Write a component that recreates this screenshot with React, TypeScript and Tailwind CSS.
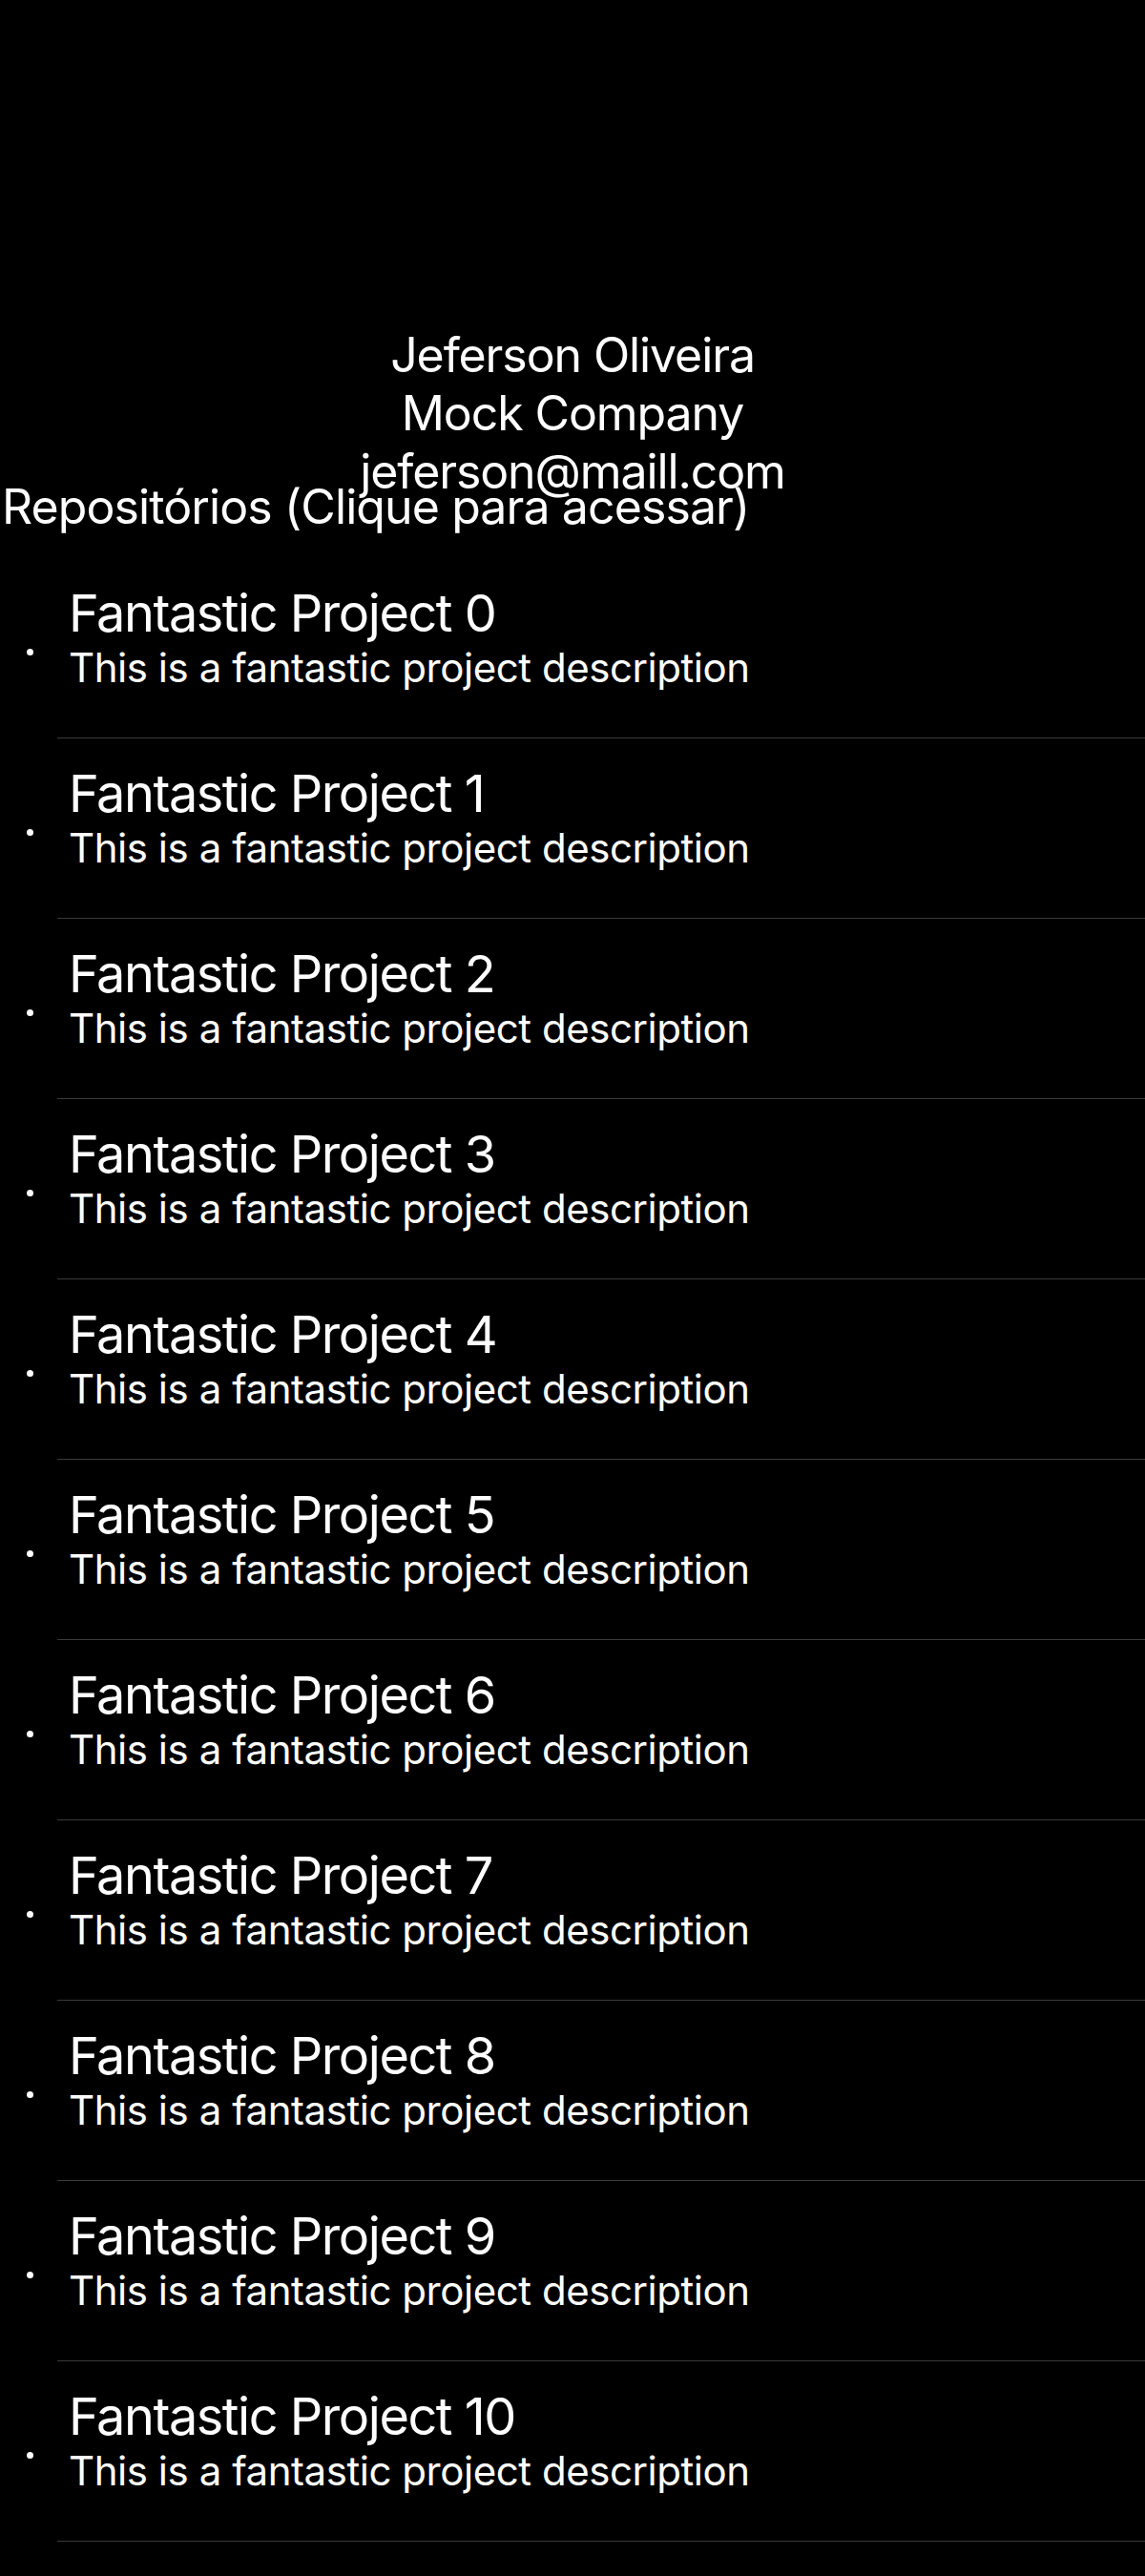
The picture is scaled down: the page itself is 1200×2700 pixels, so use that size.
import React from "react";

type Repo = {
  name: string;
  description: string;
};

const repos: Repo[] = Array.from({ length: 11 }, (_, i) => ({
  name: `Fantastic Project ${i}`,
  description: "This is a fantastic project description",
}));

const RepoRow: React.FC<{ repo: Repo }> = ({ repo }) => {
  return (
    <li className="flex h-[189px]">
      <div className="w-[60px] shrink-0 flex items-start pt-[95px] pl-[28px]">
        <span className="block w-[7px] h-[7px] rounded-full bg-white" />
      </div>
      <div className="flex-1 border-b border-[#3a3a3c] pl-[12px] pt-[26px]">
        <div className="text-[54px] leading-[64px] tracking-[-1.45px]">
          {repo.name}
        </div>
        <div className="text-[42px] leading-[50px] tracking-[-0.45px]">
          {repo.description}
        </div>
      </div>
    </li>
  );
};

export default function App() {
  return (
    <div
      className="h-[2700px] overflow-hidden bg-black text-white"
      style={{ fontFamily: "Inter, 'Noto Sans', sans-serif" }}
    >
      <header className="pt-[342px] h-[501px] text-center text-[50px] leading-[61px] tracking-[-1.1px]">
        <div>Jeferson Oliveira</div>
        <div>Mock Company</div>
        <div>jeferson@maill.com</div>
      </header>
      <h2 className="text-[50px] leading-[61px] pl-[2px] tracking-[-0.9px]">
        Repositórios (Clique para acessar)
      </h2>
      <ul className="mt-[23px]">
        {repos.map((repo) => (
          <RepoRow key={repo.name} repo={repo} />
        ))}
      </ul>
    </div>
  );
}
